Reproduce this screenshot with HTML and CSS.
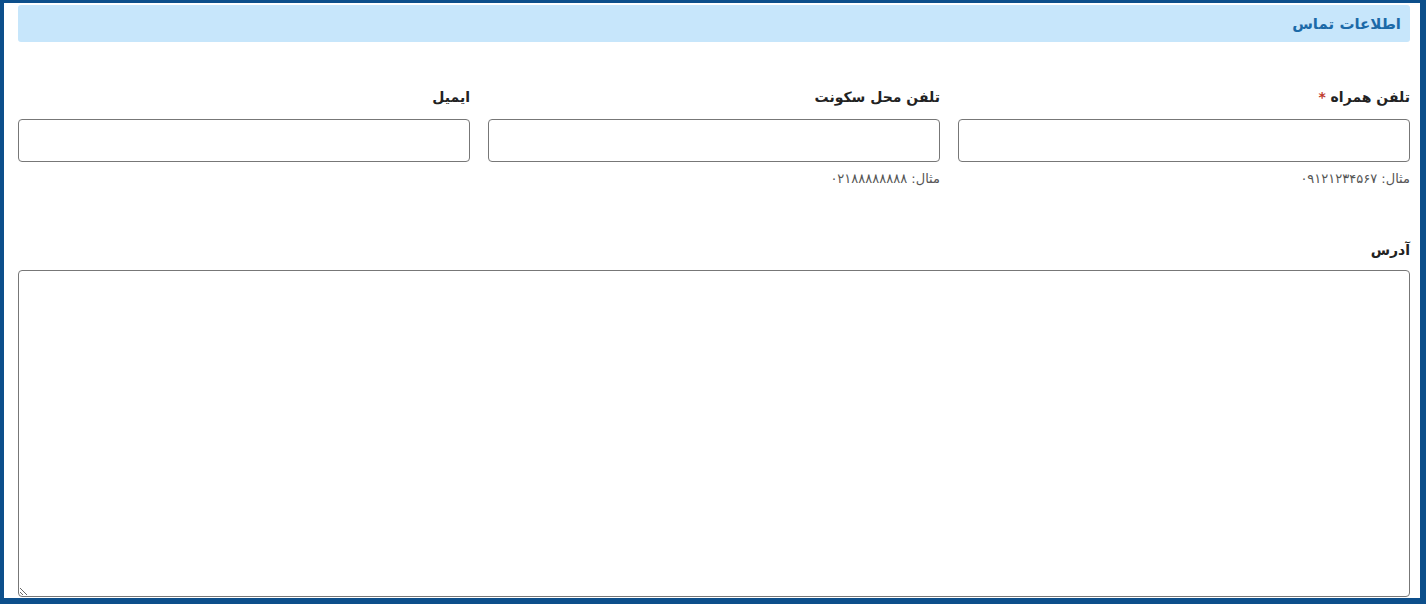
FILE: index.html
```html
<!DOCTYPE html>
<html lang="fa" dir="rtl">
<head>
    <meta charset="UTF-8">
    <meta name="viewport" content="width=device-width, initial-scale=1.0">
    <title>اطلاعات تماس</title>
    <link rel="stylesheet" href="styles.css">
</head>
<body>
    <div class="panel">
        <div class="panel-title">اطلاعات تماس</div>
        <div class="form-row">
            <div class="form-group">
                <label for="mobile">تلفن همراه <span class="required">*</span></label>
                <input type="text" id="mobile" class="form-input">
                <div class="form-hint">مثال: ۰۹۱۲۱۲۳۴۵۶۷</div>
            </div>
            <div class="form-group">
                <label for="phone">تلفن محل سکونت</label>
                <input type="text" id="phone" class="form-input">
                <div class="form-hint">مثال: ۰۲۱۸۸۸۸۸۸۸۸</div>
            </div>
            <div class="form-group">
                <label for="email">ایمیل</label>
                <input type="text" id="email" class="form-input">
            </div>
        </div>
        <div class="form-group address">
            <label for="address">آدرس</label>
            <textarea id="address" class="form-textarea"></textarea>
        </div>
    </div>
</body>
</html>
```

FILE: styles.css
```css
html, body {
    height: 100%;
}
body {
    margin: 0;
    box-sizing: border-box;
    border-style: solid;
    border-color: #0d4f8b;
    border-width: 3px 6px 6px 4px;
    background-color: #fff;
    font-family: 'DejaVu Sans', 'Noto Sans', sans-serif;
    color: #222;
    overflow: hidden;
}
.panel {
    padding: 2px 10px 0 14px;
}
.panel-title {
    background-color: #c7e6fb;
    border-radius: 3px;
    height: 37px;
    display: flex;
    align-items: center;
    padding: 0 9px;
    color: #1c6aa8;
    font-size: 15px;
    font-weight: bold;
}
.form-row {
    display: grid;
    grid-template-columns: repeat(3, 1fr);
    column-gap: 18px;
    margin-top: 44px;
}
.form-group label {
    display: block;
    font-size: 14px;
    font-weight: bold;
    color: #222;
    height: 22px;
    line-height: 22px;
    margin-bottom: 11px;
}
.required {
    color: #c0392b;
}
.form-input {
    display: block;
    width: 100%;
    height: 43px;
    box-sizing: border-box;
    border: 1px solid #777;
    border-radius: 4px;
    background: #fff;
    font-family: inherit;
}
.form-hint {
    font-size: 13px;
    color: #555;
    margin-top: 8px;
    line-height: 18px;
}
.address {
    margin-top: 51px;
}
.address label {
    margin-bottom: 9px;
}
.form-textarea {
    display: block;
    width: 100%;
    height: 327px;
    box-sizing: border-box;
    border: 1px solid #777;
    border-radius: 4px;
    resize: vertical;
    font-family: inherit;
}
```
